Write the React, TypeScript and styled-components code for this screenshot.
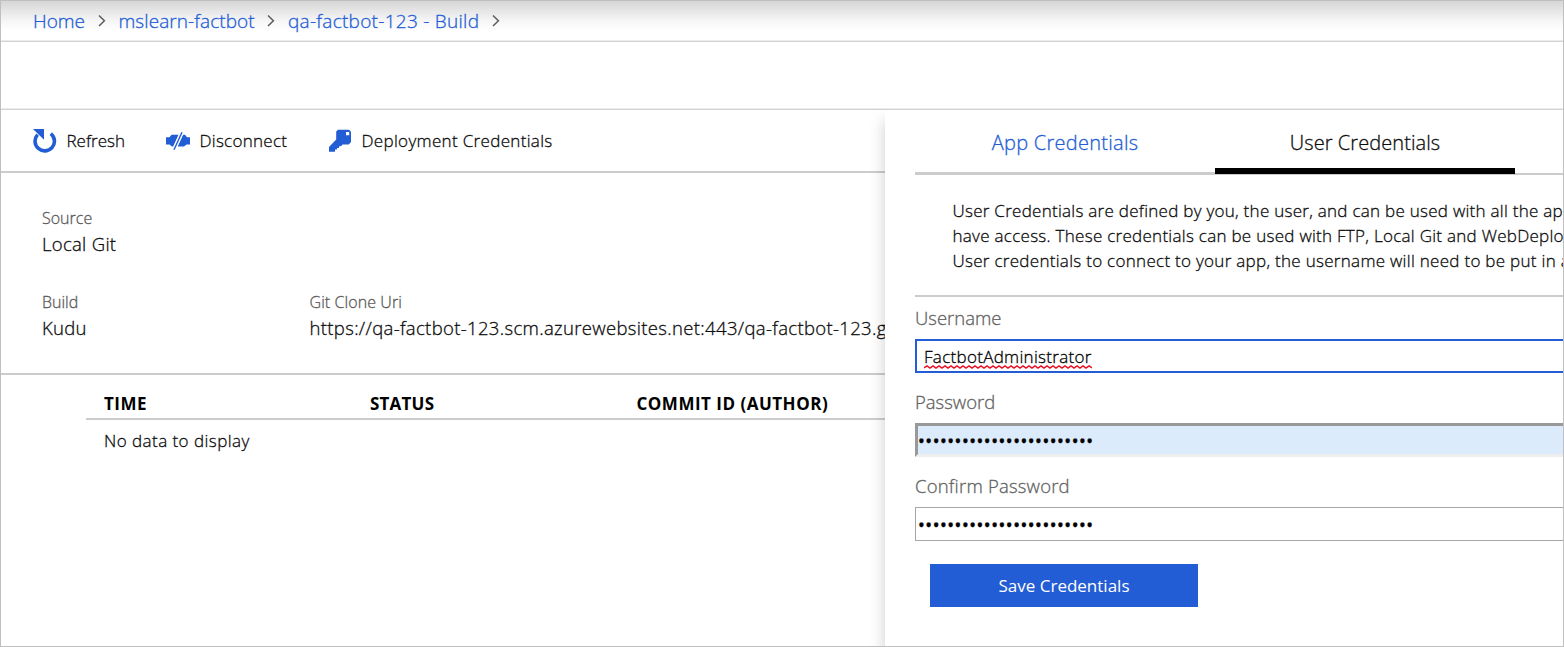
import React from 'react';
import styled, { createGlobalStyle } from 'styled-components';

const GlobalStyle = createGlobalStyle`
  * { box-sizing: border-box; }
  body { margin: 0; background: #fff; }
`;

const Window = styled.div`
  width: 1564px;
  height: 647px;
  border: 1px solid #bfbfbf;
  background: #fff;
  color: #0c0c0c;
  font-family: 'Open Sans', 'Segoe UI', sans-serif;
  font-weight: 300;
  -webkit-text-stroke: 0.3px currentColor;
  display: flex;
  flex-direction: column;
  overflow: hidden;
`;

const Breadcrumbs = styled.nav`
  flex: none;
  height: 41px;
  padding: 0 0 1px 32px;
  display: flex;
  align-items: center;
  background: linear-gradient(#d6d6d6 0px, #e6e6e6 10px, #f6f6f6 20px, #fff 30px);
  border-bottom: 1px solid #d2d2d2;
  box-shadow: inset 0 -1px 0 #ebebeb;
`;

const Crumb = styled.a<{ $width: number; $tracking?: number }>`
  width: ${p => p.$width}px;
  font-size: 19px;
  letter-spacing: ${p => p.$tracking ?? 0}px;
  color: #235dd5;
  white-space: nowrap;
`;

const Separator = styled.svg`
  width: 8px;
  height: 13px;
  margin-right: 13px;
`;

const TitleStrip = styled.div`
  flex: none;
  height: 68px;
  border-bottom: 1px solid #d2d2d2;
  box-shadow: inset 0 -1px 0 #ebebeb;
`;

const Body = styled.div`
  flex: 1;
  min-height: 0;
  display: flex;
`;

const Main = styled.main`
  width: 884px;
  flex: none;
  overflow: hidden;
`;

const Toolbar = styled.div`
  height: 63px;
  padding-left: 32px;
  display: flex;
  align-items: center;
  border-bottom: 2px solid #ccc;
`;

const ToolButton = styled.div<{ $width: number }>`
  width: ${p => p.$width}px;
  display: flex;
  align-items: center;
  gap: 9.5px;
`;

const ToolIcon = styled.svg`
  width: 24px;
  height: 24px;
  flex: none;
`;

const Label = styled.span<{ $tracking?: number }>`
  font-size: 17px;
  letter-spacing: ${p => p.$tracking ?? 0}px;
  white-space: nowrap;
`;

const Details = styled.section`
  height: 202px;
  padding: 32px 0 0 41px;
  display: grid;
  grid-template-columns: 267.5px 1fr;
  grid-auto-rows: 52px;
  row-gap: 32px;
  border-bottom: 2px solid #ccc;
`;

const Field = styled.div`
  line-height: 26px;
  white-space: nowrap;
`;

const FieldName = styled.div<{ $tracking?: number }>`
  font-size: 16px;
  letter-spacing: ${p => p.$tracking ?? 0}px;
  color: #5a5a5a;
`;

const FieldValue = styled.div<{ $tracking?: number }>`
  font-size: 18.5px;
  letter-spacing: ${p => p.$tracking ?? 0}px;
`;

const Table = styled.section`
  margin: 14px 0 0 85px;
`;

const TableHead = styled.div`
  height: 31px;
  padding-left: 18px;
  display: grid;
  grid-template-columns: 266px 266.5px 1fr;
  align-items: center;
  border-bottom: 2px solid #ccc;
`;

const HeadCell = styled.div<{ $tracking?: number }>`
  font-size: 17px;
  font-weight: 700;
  -webkit-text-stroke-width: 0;
  letter-spacing: ${p => p.$tracking ?? 0}px;
  color: #000;
`;

const EmptyRow = styled.div`
  height: 41px;
  padding-left: 18px;
  display: flex;
  align-items: center;
`;

const Panel = styled.aside`
  flex: 1;
  min-width: 0;
  position: relative;
  padding-left: 30px;
  background: #fff;
  box-shadow: 0 10px 15px rgba(0, 0, 0, 0.2);
  clip-path: inset(0 0 0 -20px);
`;

const Tabs = styled.div`
  height: 65px;
  display: flex;
  border-bottom: 2px solid #ccc;
`;

const Tab = styled.div<{ $active?: boolean; $tracking?: number }>`
  width: 300px;
  height: ${p => (p.$active ? 64 : 63)}px;
  line-height: 65px;
  text-align: center;
  font-size: 20px;
  letter-spacing: ${p => p.$tracking ?? 0}px;
  color: ${p => (p.$active ? '#0c0c0c' : '#235dd5')};
  border-bottom: ${p => (p.$active ? '6px solid #000' : '1px solid #ccc')};
`;

const Description = styled.p`
  margin: 0;
  height: 122px;
  padding: 23px 0 0 37.5px;
  font-size: 17px;
  line-height: 25px;
  white-space: nowrap;
  overflow: hidden;
  border-bottom: 2px solid #ccc;
`;

const Line = styled.span<{ $tracking?: number }>`
  display: block;
  letter-spacing: ${p => p.$tracking ?? 0}px;
`;

const FormField = styled.div`
  margin-bottom: 8px;
`;

const FormLabel = styled.div<{ $tracking?: number }>`
  height: 42px;
  line-height: 42px;
  font-size: 18.5px;
  letter-spacing: ${p => p.$tracking ?? 0}px;
  color: #626262;
`;

const InputBox = styled.div<{ $kind: 'focus' | 'filled' | 'plain' }>`
  height: 34px;
  margin-right: -4px;
  display: flex;
  align-items: center;
  color: #000;
  ${p =>
    p.$kind === 'focus'
      ? 'border: 2px solid #235dd5; padding-left: 7px;'
      : p.$kind === 'filled'
      ? 'border: 3px solid #999; border-bottom-color: #eee; padding-left: 0; background: #dcebfc;'
      : 'border: 1px solid #a6a6a6; padding-left: 2px;'}
`;

const Misspelled = styled.span`
  position: relative;
  font-size: 17px;
  letter-spacing: 0.3px;
`;

const Squiggle = styled.svg`
  position: absolute;
  left: 0;
  bottom: -1px;
  width: 168px;
  height: 4px;
`;

const Dots = styled.span`
  font-family: 'Noto Sans', sans-serif;
  font-weight: 400;
  font-size: 18px;
  line-height: 20px;
  letter-spacing: 0.55px;
`;

const SaveButton = styled.button`
  display: block;
  width: 268px;
  height: 43px;
  margin: 23px 0 0 15px;
  padding: 0;
  border: 0;
  background: #235dd5;
  color: #fff;
  font-family: inherit;
  font-weight: 400;
  font-size: 17px;
  -webkit-text-stroke-width: 0;
`;

const Chevron = () => (
  <Separator viewBox="0 0 8 13" fill="none" stroke="#5c5c5c" strokeWidth="1.5">
    <path d="M1 1.5l5.4 5.2L1 12" />
  </Separator>
);

const PASSWORD = '•'.repeat(24);

export default function App() {
  const wave = 'M0 3' + Array.from({ length: 28 }, () => 'l3 -2l3 2').join('');
  return (
    <>
      <GlobalStyle />
      <Window>
        <Breadcrumbs>
          <Crumb $width={64.5}>Home</Crumb>
          <Chevron />
          <Crumb $width={148.5} $tracking={0.07}>mslearn-factbot</Crumb>
          <Chevron />
          <Crumb $width={203.5} $tracking={0.28}>qa-factbot-123 - Build</Crumb>
          <Chevron />
        </Breadcrumbs>
        <TitleStrip />
        <Body>
          <Main>
            <Toolbar>
              <ToolButton $width={133}>
                <ToolIcon viewBox="0 0 24 24">
                  <path d="M17.8 4.6A9.7 9.7 0 1 1 4.6 5.6" fill="none" stroke="#235dd5" strokeWidth="3.6" />
                  <path d="M0 0H11V10.8z" fill="#235dd5" />
                </ToolIcon>
                <Label>Refresh</Label>
              </ToolButton>
              <ToolButton $width={162}>
                <ToolIcon viewBox="0 0 24 24" fill="#235dd5">
                  <path d="M0 8.2h3.4l2.2-2.4h7L7.2 17.4H6l-2.6-1.8H0z" />
                  <path d="M17 5.8h2l2 2.4H24v7.4h-3.4L18 17.4h-6.4z" />
                  <path d="M16 3.2L8 20.8" fill="none" stroke="#fff" strokeWidth="3.8" />
                  <path d="M16 3.2L8 20.8" fill="none" stroke="#235dd5" strokeWidth="1.4" />
                </ToolIcon>
                <Label $tracking={0.27}>Disconnect</Label>
              </ToolButton>
              <ToolButton $width={240}>
                <ToolIcon viewBox="0 0 24 24" fill="#235dd5">
                  <path
                    fillRule="evenodd"
                    d="M10 0.8H21L23 2.8V13L20.8 15.4H14.6L13 17.2H11V19H9V20.6H7V22.8H1V18L8.2 10.6V2.6zM18 3V6.2H21.2V3z"
                  />
                </ToolIcon>
                <Label $tracking={0.33}>Deployment Credentials</Label>
              </ToolButton>
            </Toolbar>
            <Details>
              <Field>
                <FieldName>Source</FieldName>
                <FieldValue $tracking={0.3}>Local Git</FieldValue>
              </Field>
              <div />
              <Field>
                <FieldName>Build</FieldName>
                <FieldValue $tracking={0.3}>Kudu</FieldValue>
              </Field>
              <Field>
                <FieldName $tracking={0.08}>Git Clone Uri</FieldName>
                <FieldValue $tracking={0.34}>https://qa-factbot-123.scm.azurewebsites.net:443/qa-factbot-123.git</FieldValue>
              </Field>
            </Details>
            <Table>
              <TableHead>
                <HeadCell $tracking={0.5}>TIME</HeadCell>
                <HeadCell $tracking={0.2}>STATUS</HeadCell>
                <HeadCell $tracking={0.5}>COMMIT ID (AUTHOR)</HeadCell>
              </TableHead>
              <EmptyRow>
                <Label $tracking={0.45}>No data to display</Label>
              </EmptyRow>
            </Table>
          </Main>
          <Panel>
            <Tabs>
              <Tab $tracking={0.27}>App Credentials</Tab>
              <Tab $active $tracking={0.07}>User Credentials</Tab>
            </Tabs>
            <Description>
              <Line $tracking={0.27}>User Credentials are defined by you, the user, and can be used with all the apps</Line>
              <Line $tracking={0.28}>have access. These credentials can be used with FTP, Local Git and WebDeploy</Line>
              <Line $tracking={0.29}>User credentials to connect to your app, the username will need to be put in a</Line>
            </Description>
            <FormField>
              <FormLabel>Username</FormLabel>
              <InputBox $kind="focus">
                <Misspelled>
                  FactbotAdministrator
                  <Squiggle viewBox="0 0 168 4" fill="none" stroke="#e81123" strokeWidth="1.5">
                    <path d={wave} />
                  </Squiggle>
                </Misspelled>
              </InputBox>
            </FormField>
            <FormField>
              <FormLabel>Password</FormLabel>
              <InputBox $kind="filled">
                <Dots>{PASSWORD}</Dots>
              </InputBox>
            </FormField>
            <FormField>
              <FormLabel $tracking={0.2}>Confirm Password</FormLabel>
              <InputBox $kind="plain">
                <Dots>{PASSWORD}</Dots>
              </InputBox>
            </FormField>
            <SaveButton>Save Credentials</SaveButton>
          </Panel>
        </Body>
      </Window>
    </>
  );
}
